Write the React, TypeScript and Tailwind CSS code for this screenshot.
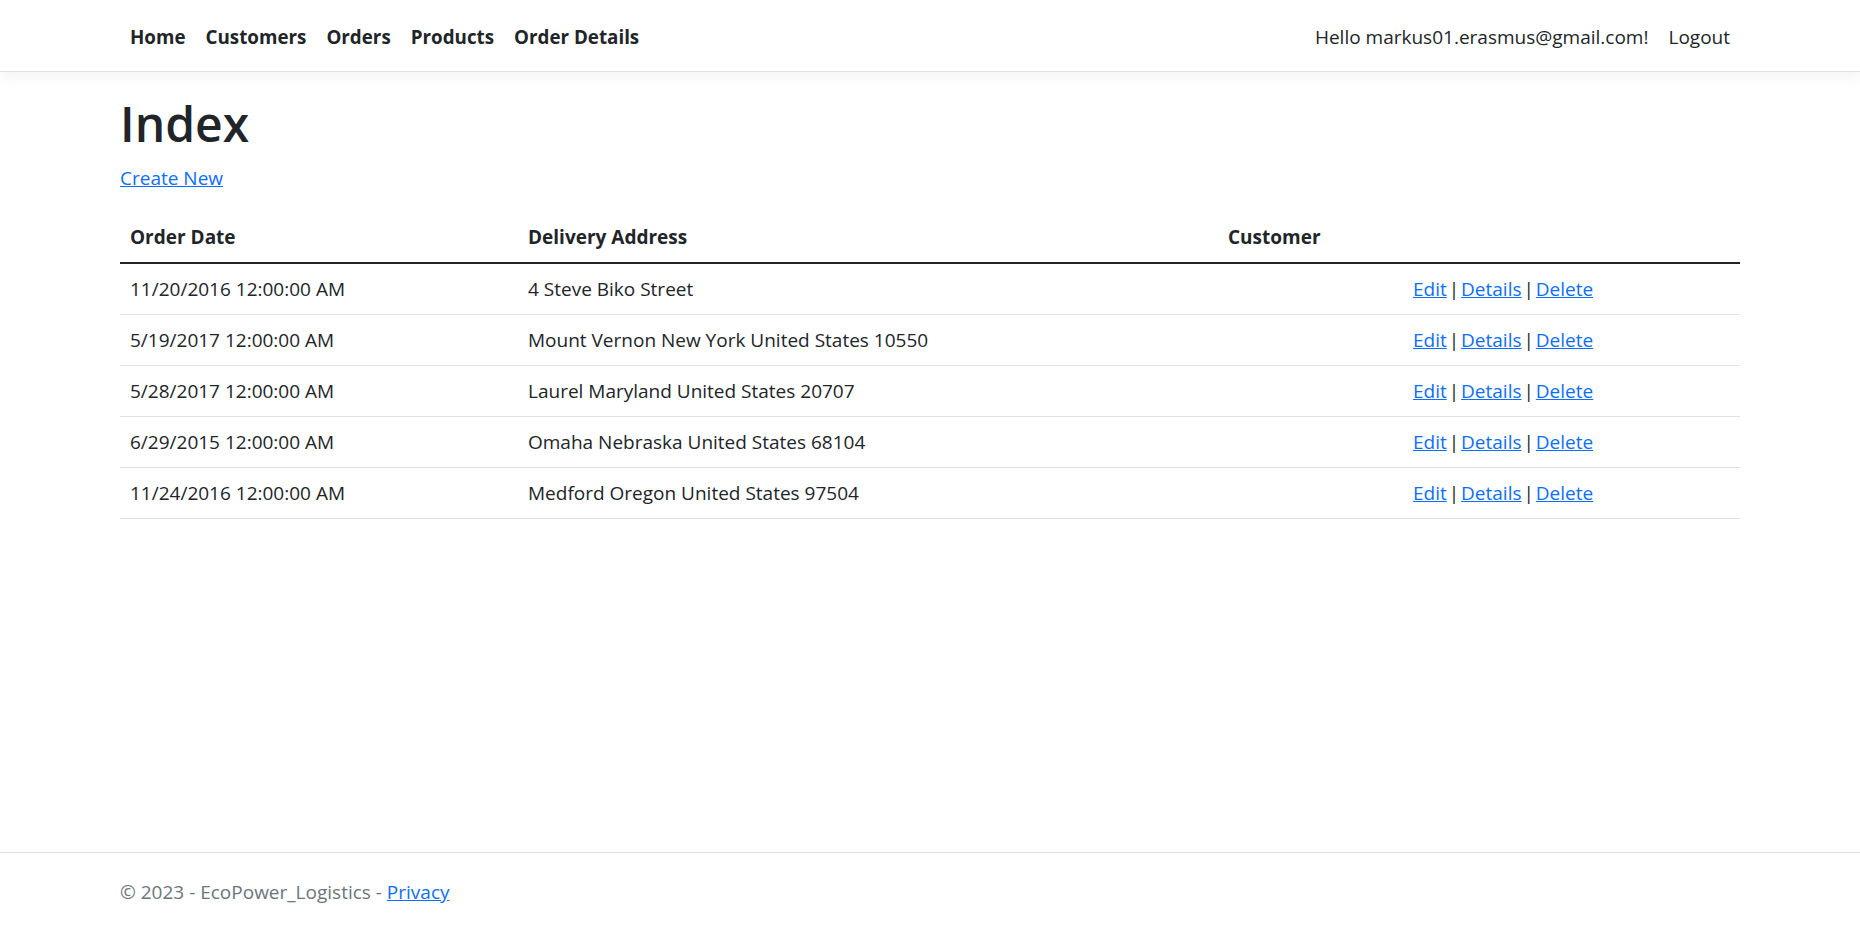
import React from "react";

interface Order {
  id: number;
  orderDate: string;
  deliveryAddress: string;
  customer: string;
}

const orders: Order[] = [
  { id: 1, orderDate: "11/20/2016 12:00:00 AM", deliveryAddress: "4 Steve Biko Street", customer: "" },
  { id: 2, orderDate: "5/19/2017 12:00:00 AM", deliveryAddress: "Mount Vernon New York United States 10550", customer: "" },
  { id: 3, orderDate: "5/28/2017 12:00:00 AM", deliveryAddress: "Laurel Maryland United States 20707", customer: "" },
  { id: 4, orderDate: "6/29/2015 12:00:00 AM", deliveryAddress: "Omaha Nebraska United States 68104", customer: "" },
  { id: 5, orderDate: "11/24/2016 12:00:00 AM", deliveryAddress: "Medford Oregon United States 97504", customer: "" },
];

const navLinks = ["Home", "Customers", "Orders", "Products", "Order Details"];

// Open Sans has a wide "|", so pull the spaces around it in a little
const Sep = () => <span className="mx-[-3px]">|</span>;

const App = () => {
  return (
    <div className="flex h-screen flex-col bg-white font-['Open_Sans',sans-serif] text-[19px] text-[#212529]">
      <header>
        <nav className="mb-5 border-b border-[#dee2e6] bg-white pt-[11px] pb-[10px] shadow-[0_5px_15px_rgba(0,0,0,0.05)]">
          <div className="mx-auto flex w-[1620px] items-center justify-between">
            <ul className="flex">
              {navLinks.map((link) => (
                <li key={link}>
                  <a
                    href="#"
                    className="block px-[10px] pt-[11px] pb-[9px] text-[18.8px] font-bold leading-[30px] text-[#212529]"
                  >
                    {link}
                  </a>
                </li>
              ))}
            </ul>
            <ul className="flex">
              <li>
                <span className="block px-[10px] pt-[11px] pb-[9px] leading-[30px]">
                  Hello markus01.erasmus@gmail.com!
                </span>
              </li>
              <li>
                <a href="#" className="block px-[10px] pt-[11px] pb-[9px] leading-[30px] text-[#212529]">
                  Logout
                </a>
              </li>
            </ul>
          </div>
        </nav>
      </header>

      <main className="mx-auto w-[1620px] flex-1">
        <h1 className="mb-[9px] pt-[2px] text-[48px] font-semibold leading-[60px]">Index</h1>
        <p className="mb-[19px] leading-[30px]">
          <a href="#" className="text-[#0d6efd] underline">
            Create New
          </a>
        </p>

        <table className="w-full table-fixed border-collapse text-left">
          <thead>
            <tr className="border-b-2 border-[#212529]">
              <th className="w-[398px] px-[10px] py-[10px] font-bold leading-[30px]">Order Date</th>
              <th className="w-[700px] px-[10px] py-[10px] font-bold leading-[30px]">Delivery Address</th>
              <th className="w-[185px] px-[10px] py-[10px] font-bold leading-[30px]">Customer</th>
              <th className="px-[10px] py-[10px] leading-[30px]"></th>
            </tr>
          </thead>
          <tbody>
            {orders.map((order) => (
              <tr key={order.id} className="border-b border-[#dee2e6]">
                <td className="px-[10px] py-[10px] leading-[30px]">{order.orderDate}</td>
                <td className="px-[10px] py-[10px] leading-[30px]">{order.deliveryAddress}</td>
                <td className="px-[10px] py-[10px] leading-[30px]">{order.customer}</td>
                <td className="px-[10px] py-[10px] leading-[30px]">
                  <a href="#" className="text-[#0d6efd] underline">Edit</a> <Sep />{" "}
                  <a href="#" className="text-[#0d6efd] underline">Details</a> <Sep />{" "}
                  <a href="#" className="text-[#0d6efd] underline">Delete</a>
                </td>
              </tr>
            ))}
          </tbody>
        </table>
      </main>

      <footer className="h-[76px] border-t border-[#dee2e6] pt-[4px] leading-[71px] text-[#6c757d]">
        <div className="mx-auto w-[1620px]">
          &copy; 2023 - EcoPower_Logistics -{" "}
          <a href="#" className="text-[#0d6efd] underline">
            Privacy
          </a>
        </div>
      </footer>
    </div>
  );
};

export default App;
